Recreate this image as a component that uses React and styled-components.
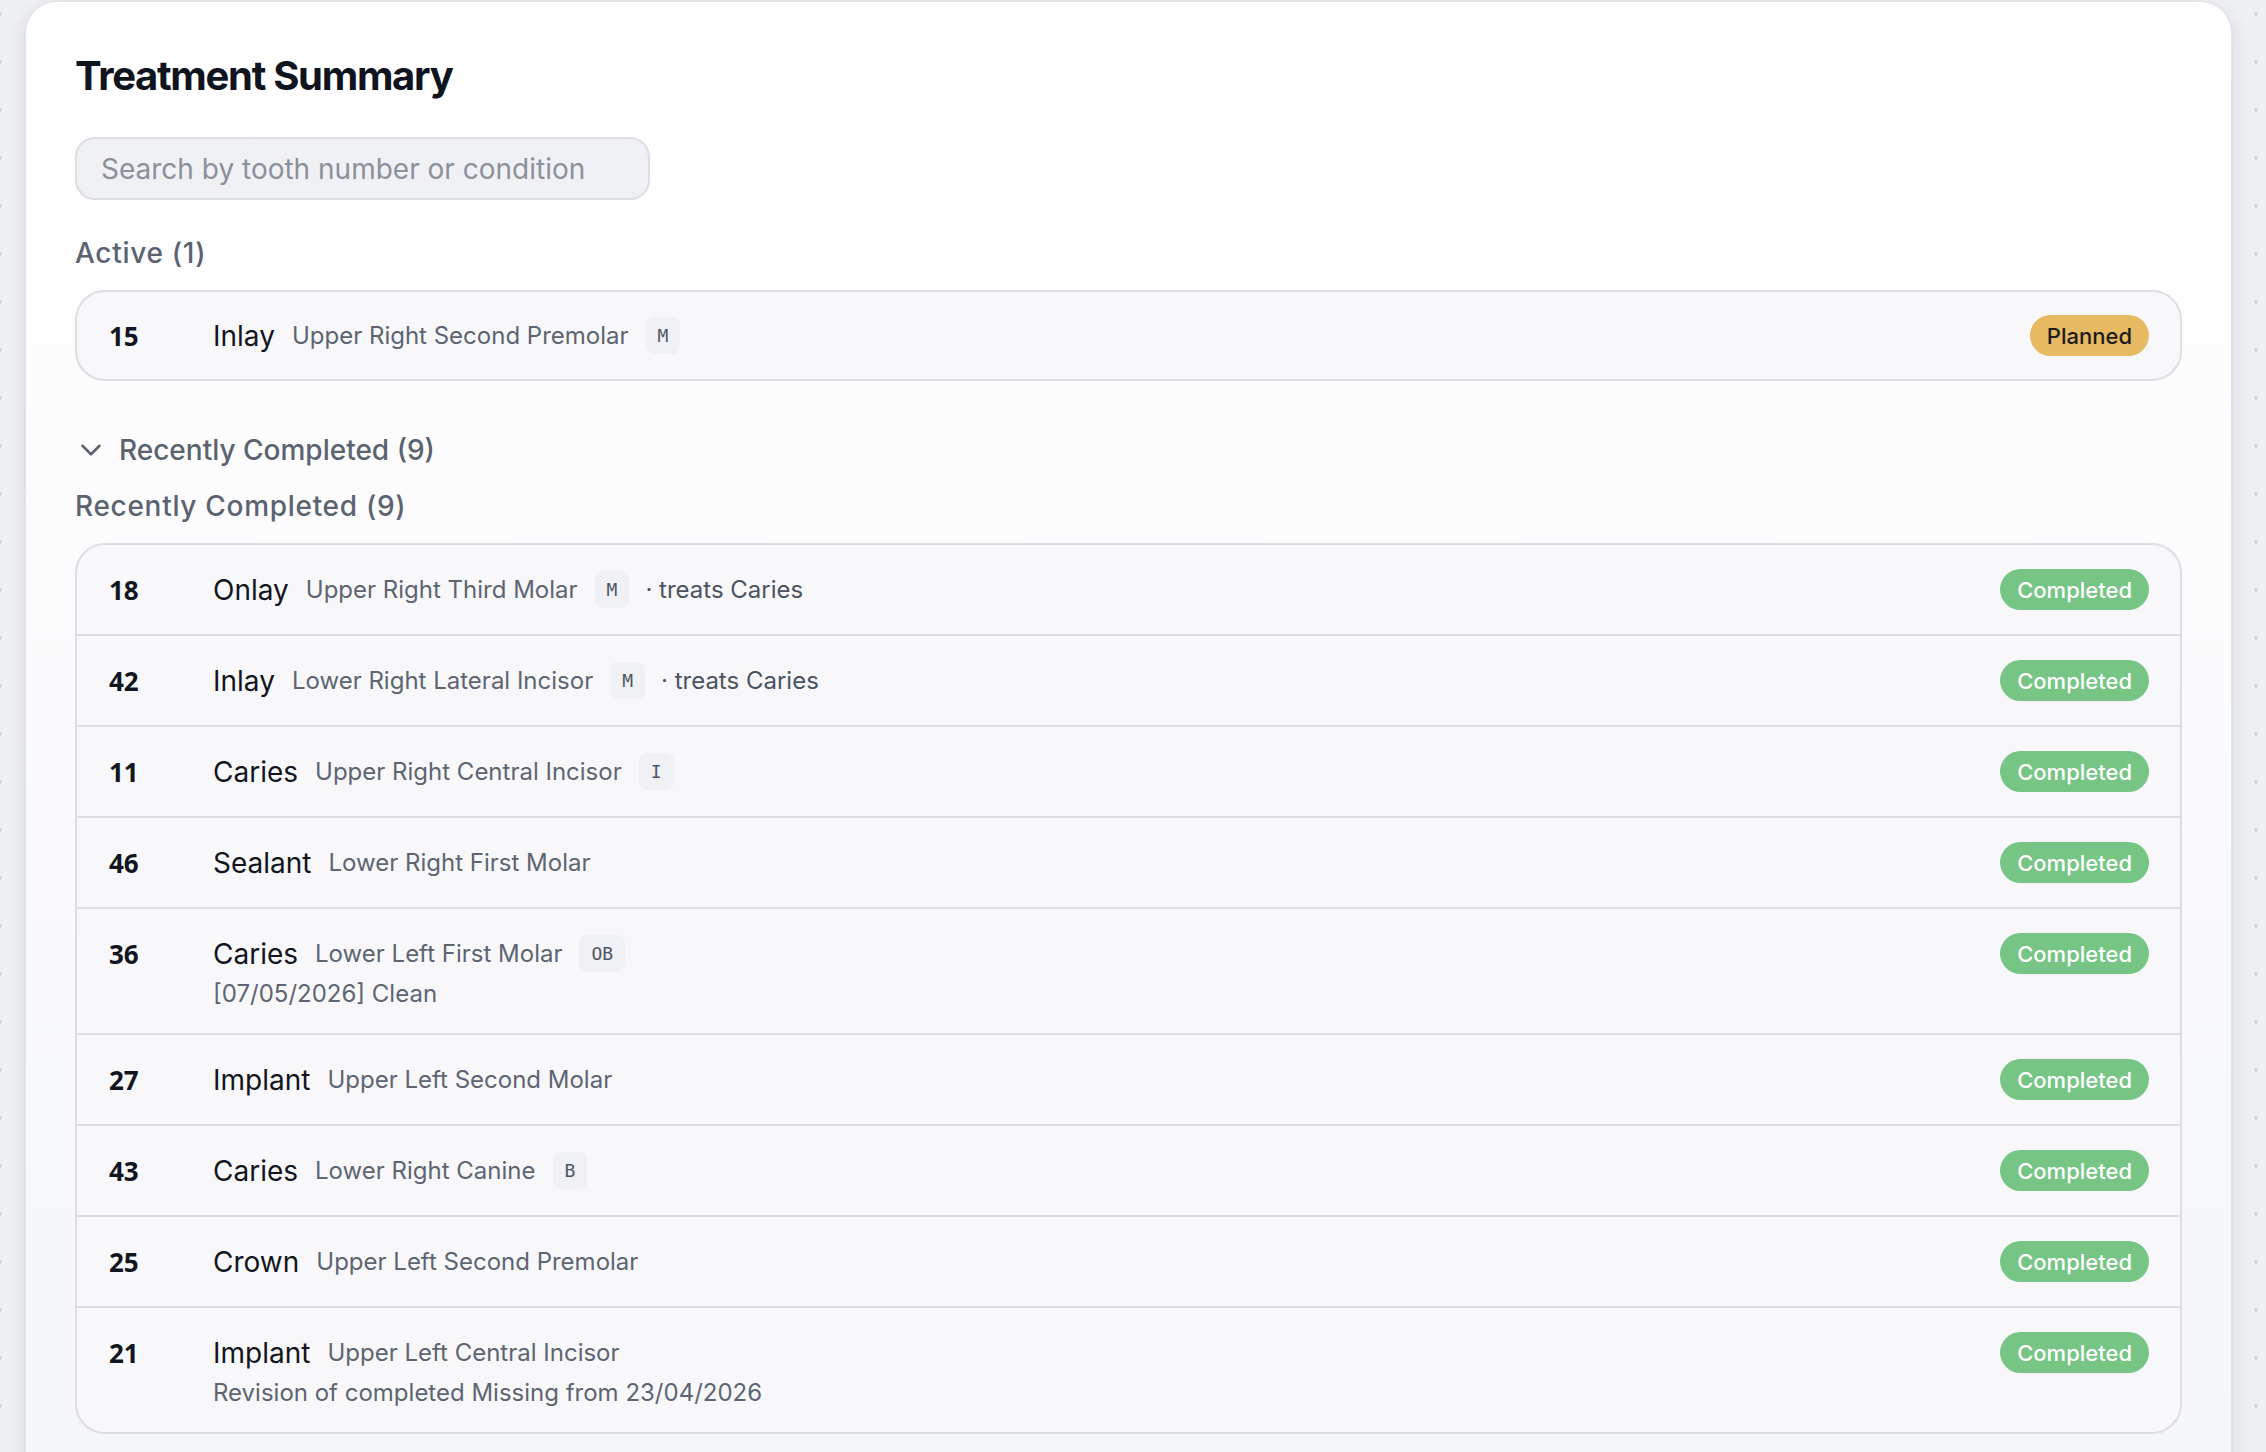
import React from "react";
import styled, { createGlobalStyle } from "styled-components";

const GlobalStyle = createGlobalStyle`
  html, body {
    margin: 0;
    padding: 0;
  }
  body {
    background-color: #eef0f3;
    background-image: radial-gradient(circle, #d2d5da 1.6px, transparent 2px);
    background-size: 48px 48px;
    background-position: -24px -10px;
    font-family: Inter, "Noto Sans", sans-serif;
  }
  * { box-sizing: border-box; }
`;

const Page = styled.div`
  padding: 1px 34px 0 25px;
`;

const Card = styled.section`
  display: flex;
  flex-direction: column;
  background: linear-gradient(180deg, #ffffff 0%, #fbfbfd 45%, #f4f6fa 100%);
  border: 1px solid #e2e4e8;
  border-radius: 32px;
  box-shadow: 0 6px 22px rgba(20, 28, 45, 0.10), 0 1px 3px rgba(20, 28, 45, 0.06);
  padding: 50px 49px 50px 49px;
`;

const Title = styled.h1`
  margin: 0 0 37px;
  font-family: Inter, sans-serif;
  font-weight: 700;
  font-size: 40px;
  line-height: 48px;
  letter-spacing: -1.3px;
  color: #0f141e;
`;

const SearchInput = styled.input`
  width: 575px;
  height: 63px;
  margin: 0 0 35px;
  padding: 0 24px;
  border: 2px solid #dcdee3;
  border-radius: 20px;
  background: #f0f1f5;
  font-family: Inter, sans-serif;
  font-size: 28px;
  color: #1f2430;
  outline: none;
  &::placeholder {
    color: #8b909a;
  }
`;

const SectionLabel = styled.h2`
  margin: 0 0 19px;
  font-family: Inter, sans-serif;
  font-weight: 500;
  font-size: 28px;
  line-height: 36px;
  letter-spacing: 0.7px;
  color: #5b6371;
`;

const Toggle = styled.button`
  display: flex;
  align-items: center;
  gap: 11px;
  margin: 51px 0 20px -1px;
  padding: 0;
  border: 0;
  background: none;
  font-family: Inter, sans-serif;
  font-weight: 500;
  font-size: 28px;
  line-height: 36px;
  color: #5b6371;
  cursor: pointer;
  text-align: left;
`;

const ListBox = styled.div`
  border: 2px solid #dddee3;
  border-radius: 30px;
  background: #f8f8fa;
  overflow: hidden;
`;

const Row = styled.div`
  display: flex;
  align-items: flex-start;
  gap: 24px;
  padding: ${(p) => (p.$tight ? "23px" : "24px")} 31px 0 32px;
  padding-bottom: ${(p) => (p.$tight ? "23px" : "24px")};
  & + & {
    border-top: 2px solid #dddee3;
  }
`;

const ToothNo = styled.div`
  flex: 0 0 80px;
  height: 41px;
  display: flex;
  align-items: center;
  font-family: "Open Sans", "Noto Sans", sans-serif;
  font-weight: 700;
  font-size: 26px;
  color: #111520;
`;

const Body = styled.div`
  flex: 1;
  display: flex;
  flex-direction: column;
`;

const Line = styled.div`
  display: flex;
  align-items: center;
  min-height: 41px;
`;

const Name = styled.span`
  font-family: Inter, sans-serif;
  font-size: 28px;
  color: #12151d;
`;

const Region = styled.span`
  margin-left: 17px;
  font-family: Inter, sans-serif;
  font-size: 24px;
  color: #5d6472;
`;

const Tag = styled.span`
  margin-left: 17px;
  height: 37px;
  padding: 0 12px;
  display: inline-flex;
  align-items: center;
  border-radius: 8px;
  background: #f0f1f4;
  font-family: "DejaVu Sans Mono", "Liberation Mono", monospace;
  font-size: 18px;
  color: #4f5663;
`;

const Extra = styled.span`
  margin-left: 16px;
  font-family: Inter, sans-serif;
  font-size: 24px;
  color: #4b5261;
`;

const Note = styled.div`
  margin-top: 4px;
  font-family: Inter, sans-serif;
  font-size: 24px;
  line-height: 31px;
  color: #5d6472;
`;

const Status = styled.span`
  flex-shrink: 0;
  height: 41px;
  padding: 0 17px;
  display: inline-flex;
  align-items: center;
  border-radius: 999px;
  font-family: Inter, sans-serif;
  font-weight: 500;
  font-size: 22px;
  background: ${(p) => (p.$tone === "planned" ? "#e8b963" : "#76c585")};
  color: ${(p) => (p.$tone === "planned" ? "#1b1b1b" : "#ffffff")};
`;

const Chevron = () => (
  <svg width="34" height="34" viewBox="0 0 24 24" fill="none" stroke="#5b6371" strokeWidth="1.8" strokeLinecap="round" strokeLinejoin="round">
    <path d="m6 9 6 6 6-6" />
  </svg>
);

const active = [
  { no: 15, name: "Inlay", region: "Upper Right Second Premolar", tag: "M", status: "Planned" },
];

const completed = [
  { no: 18, name: "Onlay", region: "Upper Right Third Molar", tag: "M", extra: "· treats Caries" },
  { no: 42, name: "Inlay", region: "Lower Right Lateral Incisor", tag: "M", extra: "· treats Caries" },
  { no: 11, name: "Caries", region: "Upper Right Central Incisor", tag: "I" },
  { no: 46, name: "Sealant", region: "Lower Right First Molar" },
  { no: 36, name: "Caries", region: "Lower Left First Molar", tag: "OB", note: "[07/05/2026] Clean" },
  { no: 27, name: "Implant", region: "Upper Left Second Molar" },
  { no: 43, name: "Caries", region: "Lower Right Canine", tag: "B" },
  { no: 25, name: "Crown", region: "Upper Left Second Premolar" },
  { no: 21, name: "Implant", region: "Upper Left Central Incisor", note: "Revision of completed Missing from 23/04/2026" },
];

function TreatmentRow({ item, tight }) {
  const planned = item.status === "Planned";
  return (
    <Row $tight={tight}>
      <ToothNo>{item.no}</ToothNo>
      <Body>
        <Line>
          <Name>{item.name}</Name>
          <Region>{item.region}</Region>
          {item.tag && <Tag>{item.tag}</Tag>}
          {item.extra && <Extra>{item.extra}</Extra>}
        </Line>
        {item.note && <Note>{item.note}</Note>}
      </Body>
      <Status $tone={planned ? "planned" : "completed"}>{item.status || "Completed"}</Status>
    </Row>
  );
}

export default function App() {
  return (
    <>
      <GlobalStyle />
      <Page>
        <Card>
          <Title>Treatment Summary</Title>
          <SearchInput placeholder="Search by tooth number or condition" />
          <SectionLabel>Active (1)</SectionLabel>
          <ListBox>
            {active.map((it) => (
              <TreatmentRow key={it.no} item={it} tight />
            ))}
          </ListBox>
          <Toggle>
            <Chevron />
            Recently Completed (9)
          </Toggle>
          <SectionLabel>Recently Completed (9)</SectionLabel>
          <ListBox>
            {completed.map((it) => (
              <TreatmentRow key={it.no} item={it} />
            ))}
          </ListBox>
        </Card>
      </Page>
    </>
  );
}
